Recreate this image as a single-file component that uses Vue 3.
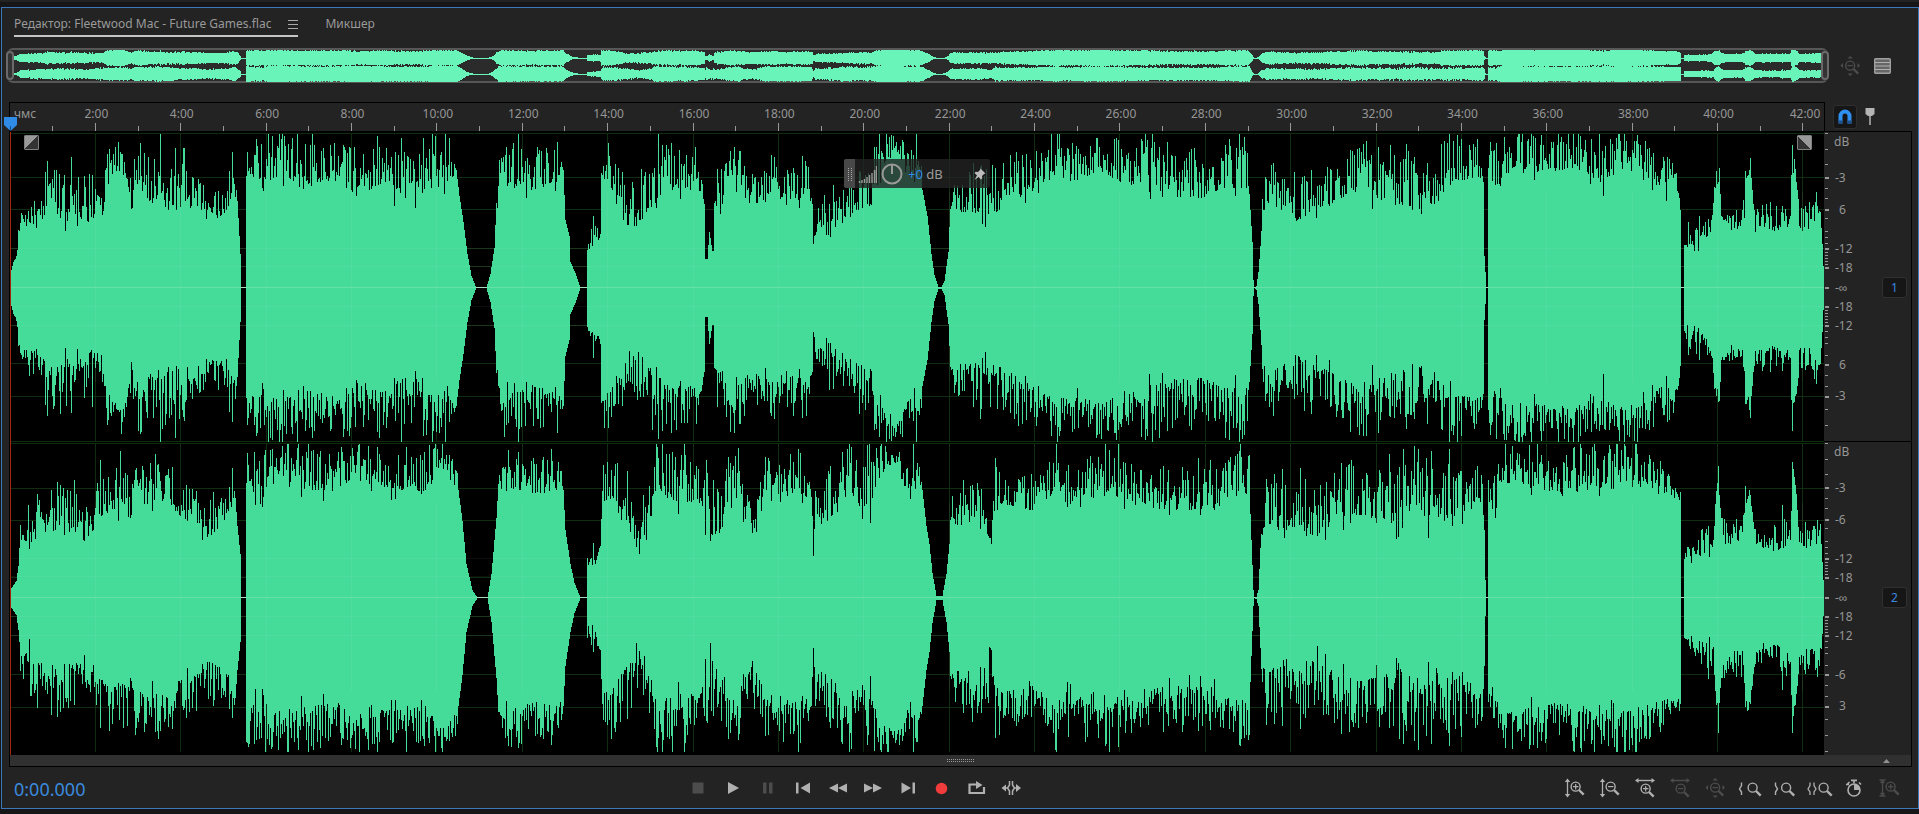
<script setup>
const PLOT_W = 1814
const CH_H = 310
const MID = 155

/* Envelope points: [x, peak, body]; body defaults to peak where the outline is smooth. */
const envelopes = [
  [
    [0, 14], [3, 26], [6, 36, 30], [9, 70, 55], [12, 84, 62], [20, 89, 62], [32, 88, 66], [36, 115, 80], [50, 126, 70],
    [65, 112, 74], [80, 114, 62], [90, 87, 60], [98, 137, 104], [108, 146, 118], [115, 150, 110], [119, 98, 74],
    [127, 146, 104], [140, 138, 86], [158, 140, 76], [170, 132, 78], [180, 116, 79], [195, 100, 77], [205, 92, 67],
    [215, 102, 76], [223, 127, 92], [226, 108, 90], [228, 70], [230, 34], [231, 0], [235, 0], [235.5, 128, 108],
    [255, 148, 106], [268, 154, 112], [290, 140, 96], [320, 146, 108], [350, 138, 92], [372, 142, 104], [394, 138, 88],
    [410, 142, 92], [422, 154, 112], [440, 154, 106], [446, 118], [449, 92], [453, 66], [457, 34], [461, 12], [466, 0],
    [476, 0], [480, 14], [484, 40], [486, 85], [487, 115, 88], [491, 154, 110], [500, 144, 104], [525, 140, 96],
    [550, 140, 108], [553, 118], [555, 68], [559, 52], [560, 26], [565, 15], [570, 0], [576, 0], [576.5, 37],
    [582, 66, 42], [590, 58, 50], [591, 140, 112], [607, 132, 92], [615, 92, 60], [627, 112, 62], [642, 142, 82],
    [656, 146, 96], [685, 140, 98], [691, 118, 92], [694, 84], [695, 29], [697, 29], [699, 56], [702, 37], [703, 37],
    [704, 118, 80], [725, 136, 98], [738, 110, 79], [766, 132, 96], [776, 112, 78], [797, 130, 96], [802, 84],
    [803, 44], [807, 84, 60], [819, 102, 58], [836, 92, 68], [852, 122, 78], [862, 118, 78], [866, 142, 98],
    [873, 154, 122], [886, 154, 142], [896, 142, 112], [909, 154, 110], [912, 98], [917, 72], [921, 34], [924, 13],
    [928, 1], [931, 1], [934, 7], [938, 36], [940, 86, 76], [948, 112, 76], [979, 122, 72], [999, 120, 82],
    [1023, 134, 98], [1046, 150, 112], [1060, 138, 106], [1093, 154, 116], [1113, 136, 102], [1134, 152, 102],
    [1158, 132, 90], [1190, 128, 90], [1222, 142, 100], [1236, 152, 98], [1239, 94], [1242, 46], [1243, 8], [1244, 0],
    [1246, 2], [1248, 16], [1250, 42], [1252, 94, 70], [1259, 122, 86], [1284, 108, 66], [1304, 116, 76],
    [1344, 138, 96], [1378, 128, 84], [1403, 138, 78], [1426, 112, 80], [1433, 146, 104], [1468, 148, 110],
    [1473, 106], [1474, 32], [1476, 0], [1477.5, 0], [1478, 142, 104], [1488, 142, 100], [1493, 152, 114],
    [1530, 152, 116], [1572, 154, 120], [1593, 140, 96], [1602, 154, 120], [1627, 146, 116], [1657, 124, 94],
    [1666, 126, 100], [1669, 90], [1670, 78], [1670.5, 0], [1673, 0], [1673.5, 42], [1676, 60, 42], [1686, 72, 40],
    [1701, 74, 54], [1704, 118, 100], [1707, 120, 100], [1709, 126, 108], [1711, 76, 70], [1715, 92, 66],
    [1717, 74, 62], [1731, 80, 58], [1734, 92, 66], [1735, 114, 104], [1738, 118, 108], [1740, 148, 122],
    [1742, 98], [1745, 70, 56], [1753, 90, 62], [1763, 76, 56], [1780, 80, 64], [1781, 148, 120], [1784, 132, 112],
    [1787, 98], [1789, 78, 54], [1806, 94, 64], [1810, 76], [1812, 44], [1814, 0],
  ],
  [
    [0, 8], [6, 17], [8, 32], [10, 70, 56], [19, 104, 54], [35, 102, 66], [50, 112, 68], [70, 102, 64], [77, 78, 50],
    [79, 92, 72], [88, 122, 80], [110, 146, 88], [119, 112, 78], [128, 134, 92], [157, 134, 98], [169, 116, 80],
    [186, 104, 76], [198, 102, 60], [218, 98, 76], [222, 146, 96], [225, 100], [227, 72], [230, 44], [231, 0],
    [235, 0], [235.5, 150, 112], [253, 140, 90], [258, 154, 114], [329, 144, 104], [343, 154, 122], [383, 146, 108],
    [419, 142, 106], [425, 154, 130], [445, 154, 122], [448, 108], [452, 77], [456, 34], [462, 8], [467, 0], [477, 0],
    [481, 24], [486, 80], [488, 114], [491, 154, 108], [497, 150, 110], [526, 138, 104], [550, 140, 104], [553, 108],
    [555, 68], [560, 34], [564, 15], [570, 0], [576, 0], [576.5, 38, 26], [582, 60, 34], [585, 34], [588, 56, 46],
    [590, 52], [593, 140, 96], [604, 140, 84], [626, 100, 56], [637, 90, 56], [644, 148, 100], [673, 142, 96],
    [691, 130, 94], [695, 120, 66], [707, 136, 60], [728, 148, 104], [733, 104, 76], [746, 112, 64], [752, 132, 100],
    [769, 142, 104], [787, 146, 104], [801, 116, 100], [803, 70, 40], [805, 112, 70], [822, 130, 80], [834, 150, 92],
    [860, 154, 92], [867, 154, 118], [883, 154, 134], [895, 142, 110], [907, 150, 108], [912, 108], [916, 72],
    [919, 54], [922, 25], [926, 2], [932, 2], [936, 24], [939, 54], [940, 78], [942, 104, 72], [965, 114, 72],
    [981, 112, 60], [985, 138, 94], [1022, 122, 88], [1038, 134, 98], [1046, 154, 112], [1052, 124, 90],
    [1079, 146, 106], [1099, 146, 106], [1124, 132, 92], [1152, 130, 88], [1201, 128, 88], [1234, 148, 102],
    [1239, 148, 106], [1241, 58], [1243, 8], [1244, 0], [1246, 1], [1248, 8], [1250, 50], [1251, 78, 58],
    [1254, 112, 64], [1280, 114, 72], [1304, 118, 62], [1317, 122, 70], [1344, 142, 84], [1364, 124, 78],
    [1393, 130, 70], [1402, 138, 82], [1426, 126, 68], [1442, 134, 84], [1453, 124, 72], [1472, 124, 98], [1474, 68],
    [1475, 18], [1476, 0], [1477.5, 0], [1478, 120, 98], [1485, 112, 78], [1490, 150, 116], [1553, 142, 102],
    [1589, 152, 110], [1607, 154, 114], [1633, 146, 108], [1656, 126, 100], [1669, 112, 98], [1670, 106], [1670.5, 0],
    [1673, 0], [1673.5, 38], [1676, 52, 40], [1687, 68, 40], [1703, 74, 46], [1705, 114, 98], [1708, 130, 108],
    [1711, 90, 80], [1714, 74, 54], [1732, 72, 50], [1735, 108, 94], [1740, 122, 100], [1743, 76], [1745, 70, 54],
    [1765, 72, 46], [1773, 84, 50], [1780, 66, 56], [1782, 132, 116], [1785, 128, 104], [1787, 88], [1789, 72, 52],
    [1810, 74, 50], [1812, 36], [1814, 0],
  ],
]

function noise(seed) {
  let s = seed
  return () => {
    s = (s + 0x6d2b79f5) | 0
    let t = Math.imul(s ^ (s >>> 15), 1 | s)
    t = (t + Math.imul(t ^ (t >>> 7), 61 | t)) ^ t
    return ((t ^ (t >>> 14)) >>> 0) / 4294967296
  }
}

function sample(points, rand) {
  const cols = []
  let k = 0
  for (let x = 0; x < PLOT_W; x++) {
    while (k < points.length - 2 && points[k + 1][0] <= x) k++
    const [x0, p0, b0 = p0] = points[k]
    const [x1, p1, b1 = p1] = points[k + 1]
    const f = (x - x0) / (x1 - x0)
    const peak = p0 + (p1 - p0) * f
    const body = b0 + (b1 - b0) * f
    const range = peak - body
    const shared = rand()
    const spike = rand() > 0.92
    const dip = rand() > 0.95
    const amp = () => {
      const r = rand() < 0.5 ? shared : rand()
      let a = body + range * Math.pow(r, 1.5) * 1.05
      if (spike) a = peak + range * 0.35 * rand()
      else if (dip) a = body - range * 0.3 * rand()
      return Math.max(0, Math.min(154, Math.round(a)))
    }
    cols.push([amp(), amp(), body, peak])
  }
  return cols
}

function outline(cols, mid, up, down) {
  let top = ''
  let bottom = ''
  cols.forEach((c, i) => {
    top += `V${mid - up(c)}h1`
    const j = cols.length - 1 - i
    bottom += `V${mid + down(cols[j])}h-1`
  })
  return `M0 ${mid}${top}${bottom}z`
}

const samples = envelopes.map((points, i) => sample(points, noise(77 + i * 31)))
const waves = samples.map((cols) => outline(cols, MID + 0.5, (c) => c[0], (c) => c[1]))

const shrink = (a, c) => Math.min(8, Math.max(0.5, Math.round((c[2] * 0.55 + a * 0.45) / 15)))
const overviews = samples.map((cols) => outline(cols, 8, (c) => shrink(c[0], c), (c) => shrink(c[1], c)))

const marks = Array.from({ length: 21 }, (_, i) => ({
  x: ((i + 1) * 85.38 * 100) / PLOT_W + '%',
  mid: ((i + 0.5) * 85.38 * 100) / PLOT_W + '%',
  labelX: ((i === 20 ? 1795 : (i + 1) * 85.38 + 1) * 100) / PLOT_W + '%',
  text: (i + 1) * 2 + ':00',
}))

const pct = (offset) => ((MID + 0.5 + offset) * 100) / CH_H + '%'
const majors = [-110, -78, -39, -20, 0, 19, 38, 77, 109]
const minors = [-154, -138, -123, -99, -89, -69, -56, -50, -44, -35, -32, -29, -26, -23, 23, 26, 29, 32, 35, 44, 50, 56, 68, 88, 99, 122, 138, 154]
const channels = [
  { id: 1, labels: ['-3', '6', '-12', '-18', '-∞', '-18', '-12', '6', '-3'], grid: [-154, -110, -78, -39, -21, 38, 76, 109, 154] },
  { id: 2, labels: ['-3', '-6', '-12', '-18', '-∞', '-18', '-12', '-6', '3'], grid: [-154, -109, -77, -20, 19, 38, 77, 110] },
]

const transport = [
  { name: 'Стоп', icon: 'stop', off: true },
  { name: 'Воспроизвести', icon: 'play' },
  { name: 'Пауза', icon: 'pause', off: true },
  { name: 'В начало', icon: 'first' },
  { name: 'Назад', icon: 'rewind' },
  { name: 'Вперёд', icon: 'forward' },
  { name: 'В конец', icon: 'last' },
  { name: 'Запись', icon: 'record' },
  { name: 'Цикл', icon: 'loop' },
  { name: 'Пропустить выделение', icon: 'skip' },
]
const zooms = [
  { name: 'Увеличить амплитуду', icon: 'amp-in' },
  { name: 'Уменьшить амплитуду', icon: 'amp-out' },
  { name: 'Увеличить время', icon: 'time-in' },
  { name: 'Уменьшить время', icon: 'time-out', off: true },
  { name: 'Показать всё', icon: 'full', off: true },
  { name: 'К точке входа', icon: 'in-point' },
  { name: 'К точке выхода', icon: 'out-point' },
  { name: 'К выделению', icon: 'selection' },
  { name: 'По времени', icon: 'timer' },
  { name: 'Сбросить амплитуду', icon: 'amp-reset', off: true },
]
</script>

<template>
  <div class="app">
    <svg class="defs" aria-hidden="true">
      <symbol id="lens" viewBox="0 0 16 16">
        <circle cx="6" cy="6" r="4.8" fill="none" stroke="currentColor" stroke-width="1.5" />
        <path d="M9.6 9.6l5 5" stroke="currentColor" stroke-width="2.6" />
      </symbol>
      <symbol id="stop" viewBox="0 0 26 20"><path d="M7.5 4.5h11v11h-11z" fill="currentColor" /></symbol>
      <symbol id="play" viewBox="0 0 26 20"><path d="M8 4l11 6-11 6z" fill="currentColor" /></symbol>
      <symbol id="pause" viewBox="0 0 26 20"><path d="M8 4.500h3.5v11H8zM14 4.500h3.5v11H14z" fill="currentColor" /></symbol>
      <symbol id="first" viewBox="0 0 26 20"><path d="M6 4.5h2.5v11H6zM20 4.5v11L10.5 10z" fill="currentColor" /></symbol>
      <symbol id="rewind" viewBox="0 0 26 20"><path d="M13 5.5v9L4 10zM22 5.5v9L13 10z" fill="currentColor" /></symbol>
      <symbol id="forward" viewBox="0 0 26 20"><path d="M4 5.5v9l9-4.5zM13 5.5v9l9-4.5z" fill="currentColor" /></symbol>
      <symbol id="last" viewBox="0 0 26 20"><path d="M17.5 4.5H20v11h-2.5zM6.5 4.5v11L16 10z" fill="currentColor" /></symbol>
      <symbol id="record" viewBox="0 0 26 20"><circle cx="11.5" cy="10.500" r="5.8" fill="#f23c3c" /></symbol>
      <symbol id="loop" viewBox="0 0 26 20">
        <path d="M8.5 6.5H4.500v8.500h14.500V9" fill="none" stroke="currentColor" stroke-width="2.2" />
        <path d="M8 5.5h3V3l6.500 4-6.500 4V7.600h-3z" fill="currentColor" />
      </symbol>
      <symbol id="skip" viewBox="0 0 26 20">
        <path d="M6 6.5v7L1.5 10zM16 6v8l5-4z" fill="currentColor" />
        <path d="M5 10h3M14.500 10h3M9.500 3v4l-2 3 2 3v4M12.500 3v4l2 3-2 3v4" fill="none" stroke="currentColor" stroke-width="1.5" />
      </symbol>
      <symbol id="amp-in" viewBox="0 0 26 20">
        <path d="M5.5 2v16" stroke="currentColor" stroke-width="1.3" />
        <path d="M2.8 4L5.5.5 8.200 4zM2.8 16l2.7 3.500L8.200 16z" fill="currentColor" />
        <use href="#lens" x="8" y="3" width="15" height="15" />
        <path d="M11 8.6h5.4M13.7 6v5.4" stroke="currentColor" stroke-width="1.2" />
      </symbol>
      <symbol id="amp-out" viewBox="0 0 26 20">
        <path d="M5.5 2v16" stroke="currentColor" stroke-width="1.3" />
        <path d="M2.8 4L5.5.5 8.200 4zM2.8 16l2.7 3.500L8.200 16z" fill="currentColor" />
        <use href="#lens" x="8" y="3" width="15" height="15" />
        <path d="M11 8.6h5.4" stroke="currentColor" stroke-width="1.2" />
      </symbol>
      <symbol id="time-in" viewBox="0 0 26 20">
        <path d="M5 2.500h16" stroke="currentColor" stroke-width="1.4" />
        <path d="M6.5 0L3 2.500l3.500 2.500zM19.5 0L23 2.500l-3.500 2.500z" fill="currentColor" />
        <use href="#lens" x="8" y="5" width="15" height="15" />
        <path d="M11 10.6h5.4M13.7 8v5.4" stroke="currentColor" stroke-width="1.2" />
      </symbol>
      <symbol id="time-out" viewBox="0 0 26 20">
        <path d="M5 2.500h16" stroke="currentColor" stroke-width="1.4" />
        <path d="M6.5 0L3 2.500l3.500 2.500zM19.5 0L23 2.500l-3.500 2.500z" fill="currentColor" />
        <use href="#lens" x="8" y="5" width="15" height="15" />
        <path d="M11 10.6h5.4" stroke="currentColor" stroke-width="1.2" />
      </symbol>
      <symbol id="full" viewBox="0 0 26 20">
        <use href="#lens" x="7.5" y="4" width="15" height="15" />
        <path d="M10.5 9.6h5.4" stroke="currentColor" stroke-width="1.2" />
        <path d="M10.500 2.5L13.2 0l2.7 2.5zM10.5 17.5l2.7 2.5 2.7-2.5zM6 7L3.5 9.6 6 12.2zM20.5 7L23 9.6l-2.5 2.6z" fill="currentColor" />
      </symbol>
      <symbol id="in-point" viewBox="0 0 26 20">
        <path d="M4.5 4.5v3L2.500 11l2 3v3" fill="none" stroke="currentColor" stroke-width="1.4" />
        <use href="#lens" x="10" y="4" width="15" height="15" />
      </symbol>
      <symbol id="out-point" viewBox="0 0 26 20">
        <path d="M3.5 4.5v3l2 3.500-2 3v3" fill="none" stroke="currentColor" stroke-width="1.4" />
        <use href="#lens" x="8.5" y="4" width="15" height="15" />
      </symbol>
      <symbol id="selection" viewBox="0 0 26 20">
        <path d="M3 4.5v3L1 11l2 3v3M7 4.5v3l2 3.500-2 3v3" fill="none" stroke="currentColor" stroke-width="1.3" />
        <use href="#lens" x="11" y="4" width="15" height="15" />
      </symbol>
      <symbol id="timer" viewBox="0 0 26 20">
        <circle cx="12" cy="12" r="6" fill="none" stroke="currentColor" stroke-width="1.6" />
        <path d="M12 12V6A6 6 0 0 1 18 12zM9 1.500h6v1.800h-2.200v2h-1.600v-2H9z" fill="currentColor" />
        <path d="M5.500 6l2-2M17 4.500l2 2M4 6.500h3" stroke="currentColor" stroke-width="1.6" />
      </symbol>
      <symbol id="amp-reset" viewBox="0 0 26 20">
        <path d="M2.5 2h6M2.5 18h6M5.5 2v16M3.5 5l2-2 2 2M3.500 15l2 2 2-2" fill="none" stroke="currentColor" stroke-width="1.3" />
        <use href="#lens" x="8" y="3" width="15" height="15" />
        <path d="M11 8.6h5.4M13.7 6v5.4" stroke="currentColor" stroke-width="1.2" />
      </symbol>
    </svg>

    <main class="panel">
      <nav class="tabs">
        <div class="tab active">
          <button class="plain">Редактор: Fleetwood Mac - Future Games.flac</button>
          <button class="plain menu" aria-label="Меню панели"><i></i><i></i><i></i></button>
        </div>
        <button class="plain tab">Микшер</button>
      </nav>

      <section class="overview-row">
        <div class="overview">
          <div class="minis">
            <svg v-for="(d, i) in overviews" :key="i" viewBox="0 0 1814 16" preserveAspectRatio="none" shape-rendering="crispEdges">
              <path :d="d" fill="#69f5b9" />
            </svg>
          </div>
          <span class="handle start"></span>
          <span class="handle end"></span>
        </div>
        <div class="overview-tools">
          <button class="plain off" aria-label="Показать всё"><svg width="26" height="20"><use href="#full" /></svg></button>
          <button class="plain" aria-label="Список">
            <svg width="18" height="18" viewBox="0 0 18 18">
              <rect x=".7" y="1.7" width="15.6" height="14.6" rx="1" fill="#666" stroke="#a0a0a0" stroke-width="1.4" />
              <path d="M1 5.500h15M1 9h15M1 12.500h15" stroke="#b0b0b0" />
            </svg>
          </button>
        </div>
      </section>

      <section class="ruler-row">
        <div class="ruler">
          <svg width="100%" height="28">
            <text class="unit" x="4" y="15">чмс</text>
            <g v-for="m in marks" :key="m.text">
              <text class="time" :x="m.labelX" y="15">{{ m.text }}</text>
              <line :x1="m.x" :x2="m.x" y1="20" y2="28" />
              <line :x1="m.mid" :x2="m.mid" y1="23" y2="28" />
            </g>
          </svg>
          <svg class="playhead" width="13" height="14" viewBox="0 0 13 14"><path d="M0 0h13v8l-6.500 6L0 8z" fill="#2f8be6" /><path d="M6.500 9v5" stroke="#1a4f85" /></svg>
        </div>
        <div class="ruler-tools">
          <button class="snap" aria-label="Привязка" aria-pressed="true">
            <svg width="16" height="18" viewBox="0 0 16 18">
              <path d="M3.500 15.500V8a4.500 4.500 0 0 1 9 0V15.500" fill="none" stroke="#3090f0" stroke-width="4" />
              <path d="M1.500 12.500h4v3h-4zM10.500 12.500h4v3h-4z" fill="#1d4f86" />
            </svg>
          </button>
          <button class="plain" aria-label="Маркер">
            <svg width="10" height="18" viewBox="0 0 10 18"><path d="M.5 0h9v6L7 8H3L.5 6z" fill="#b4b4b4" /><path d="M5 7v10" stroke="#b4b4b4" stroke-width="1.5" /></svg>
          </button>
        </div>
      </section>

      <section class="editor">
        <div class="plot">
          <svg v-for="(c, i) in channels" :key="c.id" class="channel" viewBox="0 0 1814 310" preserveAspectRatio="none" shape-rendering="crispEdges">
            <g class="grid">
              <line v-for="g in c.grid" :key="g" x1="0" x2="1814" :y1="155.5 + g" :y2="155.5 + g" />
              <line v-for="n in 21" :key="n" :x1="n * 85.38" :x2="n * 85.38" y1="1" y2="310" />
            </g>
            <line x1="0" x2="1814" y1="155.5" y2="155.5" stroke="#a8d8b8" />
            <path :d="waves[i]" fill="#45dc99" />
            <g class="sheen">
              <line v-for="g in [-39, -21, 19, 38]" :key="g" x1="0" x2="1814" :y1="155.5 + g" :y2="155.5 + g" />
              <line v-for="n in 21" :key="n" :x1="n * 85.38" :x2="n * 85.38" y1="60" y2="250" />
            </g>
            <line x1="0" x2="1814" y1="155.5" y2="155.5" stroke="#a6e6bf" stroke-opacity=".35" />
          </svg>
          <button class="fade fade-in" aria-label="Нарастание"></button>
          <button class="fade fade-out" aria-label="Затухание"></button>
          <span class="cursor"></span>
          <div class="hud">
            <span class="grip"><svg width="5" height="14"><path d="M1.500 1v13M4.500 1v13" stroke="#aaa" stroke-dasharray="1 1" /></svg></span>
            <svg class="level" width="19" height="18"><path d="M1.500 16v2M4 15v3M6.500 14v4M9 12v6M11.500 10v8M14 8v10M16.500 5v13M18.500 1v17" stroke="#999" stroke-width="1.4" /></svg>
            <svg class="knob" width="22" height="22" viewBox="0 0 22 22"><circle cx="11" cy="11" r="9.500" fill="none" stroke="#999" stroke-width="2" /><path d="M11 1.500V11" stroke="#999" stroke-width="2" /></svg>
            <span class="gain"><b>+0</b> dB</span>
            <button class="plain pin" aria-label="Закрепить">
              <svg width="12" height="12" viewBox="0 0 12 12"><path d="M6.500.5l5 5-1.500.5-2 2 .3 2.300-1.300 1.200-2.500-2.500L.5 12 3 7.500.5 5l1.200-1.300L4 4l2-2z" fill="#bbb" /></svg>
            </button>
          </div>
        </div>
        <div class="axes">
          <div v-for="c in channels" :key="c.id" class="axis">
            <svg width="80" height="100%">
              <line v-for="m in minors" :key="m" x1="1" x2="4" :y1="pct(m)" :y2="pct(m)" />
              <line v-for="m in majors" :key="'M' + m" x1="1" x2="5" :y1="pct(m)" :y2="pct(m)" stroke-width="2" />
              <text x="10" :y="pct(-142)">dB</text>
              <text v-for="(m, i) in majors" :key="'t' + m" :x="c.labels[i].startsWith('-') ? 11 : 15" :y="pct(m + 4)">{{ c.labels[i] }}</text>
            </svg>
            <button class="number">{{ c.id }}</button>
          </div>
        </div>
      </section>

      <div class="splitter">
        <svg class="dots" width="28" height="5"><path d="M0 1.500h28M0 3.500h28" stroke="#999" stroke-dasharray="1 1" /></svg>
        <svg class="arrow" width="7" height="4"><path d="M0 4l3.500-4L7 4z" fill="#909090" /></svg>
      </div>

      <footer class="bar">
        <output class="clock">0:00.000</output>
        <div class="group">
          <button v-for="b in transport" :key="b.icon" class="plain tool" :class="{ off: b.off }" :aria-label="b.name">
            <svg width="26" height="20"><use :href="'#' + b.icon" /></svg>
          </button>
        </div>
        <div class="group right">
          <button v-for="b in zooms" :key="b.icon" class="plain tool" :class="{ off: b.off }" :aria-label="b.name">
            <svg width="26" height="20"><use :href="'#' + b.icon" /></svg>
          </button>
        </div>
      </footer>
    </main>
  </div>
</template>

<style>
body {
  background: #161616;
}
</style>

<style scoped>
.app {
  box-sizing: border-box;
  min-height: 100vh;
  display: flex;
  flex-direction: column;
  padding: 5px 0 5px 1px;
  border-top: 2px solid #232323;
  background: #161616;
  color: #9a9a9a;
  font: 12px/16px "Noto Sans", sans-serif;
}
.defs {
  position: absolute;
  width: 0;
  height: 0;
}
.panel {
  flex: 1;
  display: flex;
  flex-direction: column;
  border: 1px solid #3a78ba;
  background: #232323;
}
button {
  font: inherit;
  color: inherit;
  margin: 0;
  padding: 0;
}
.plain {
  border: 0;
  background: none;
}
svg {
  display: block;
}
.tabs {
  display: flex;
  align-items: flex-start;
  gap: 27px;
  height: 40px;
  padding: 8px 12px 0;
  box-sizing: border-box;
}
.tab {
  display: flex;
  align-items: center;
  height: 16px;
}
.active {
  gap: 17px;
  padding-bottom: 3px;
  border-bottom: 2px solid #c4c4c4;
}
.menu {
  display: flex;
  flex-direction: column;
  gap: 3px;
}
.menu i {
  width: 10px;
  height: 1px;
  background: #aaa;
}
.overview-row {
  display: flex;
  height: 35px;
  padding-left: 5px;
}
.overview {
  position: relative;
  flex: 1;
  box-sizing: border-box;
  display: flex;
  align-items: center;
  border: 2px solid #575757;
  border-left-color: #444;
  border-right-color: #444;
  border-radius: 6px;
  background: #2b2b2b;
}
.handle {
  position: absolute;
  top: 1px;
  box-sizing: border-box;
  width: 8px;
  height: 29px;
  border: 2px solid #6a6a6a;
  border-radius: 4px;
  background: #333;
}
.start {
  left: -3px;
}
.end {
  right: -3px;
}
.minis {
  flex: 1;
  min-width: 0;
  margin: 0 2px 0 1px;
}
.minis svg {
  width: 100%;
  height: 16px;
}
.overview-tools {
  width: 90px;
  display: flex;
  align-items: center;
  gap: 11px;
  padding-left: 9px;
  box-sizing: border-box;
}
.off {
  color: #4c4c4c;
}
.ruler-row {
  display: flex;
  margin: 19px 6px 0 7px;
}
.ruler {
  flex: 1;
  position: relative;
  height: 28px;
  border: 1px solid #000;
  border-bottom: 0;
}
.ruler text,
.axis text {
  fill: #969696;
}
.ruler .time {
  text-anchor: middle;
}
.ruler line,
.axis line {
  stroke: #999;
  shape-rendering: crispEdges;
}
.playhead {
  position: absolute;
  left: -6px;
  bottom: 0;
}
.ruler-tools {
  width: 87px;
  display: flex;
  align-items: center;
  gap: 8px;
  padding-left: 8px;
  box-sizing: border-box;
}
.snap {
  display: grid;
  place-items: center;
  width: 24px;
  height: 24px;
  border: 1px solid #2e2e2e;
  border-radius: 3px;
  background: #161616;
}
.editor {
  flex: 1;
  display: flex;
  margin: 0 6px 0 7px;
  border: 1px solid #000;
}
.plot {
  flex: 1;
  min-width: 0;
  position: relative;
  display: flex;
  flex-direction: column;
  padding-bottom: 3px;
  background: #000;
}
.channel {
  flex: 1 1 0;
  min-height: 0;
  width: 100%;
}
.grid line {
  stroke: #0f2e10;
}
.sheen line {
  stroke: #fff;
  stroke-opacity: 0.05;
}
.cursor {
  position: absolute;
  left: 0;
  top: 0;
  bottom: 0;
  width: 1px;
  background: #a3260c;
}
.fade {
  position: absolute;
  top: 3px;
  width: 15px;
  height: 15px;
  border: 1px solid #808080;
  border-radius: 1px;
}
.fade-in {
  left: 14px;
  background: linear-gradient(135deg, #999 50%, #333 50%);
}
.fade-out {
  right: 12px;
  background: linear-gradient(225deg, #999 50%, #333 50%);
}
.hud {
  position: absolute;
  left: calc(50% - 73px);
  top: 27px;
  width: 146px;
  height: 29px;
  display: flex;
  align-items: center;
  border-radius: 2px;
  background: rgba(35, 35, 35, 0.8);
  overflow: hidden;
}
.grip {
  width: 11px;
  height: 100%;
  display: grid;
  place-items: center;
  background: #484848;
}
.level {
  margin-left: 3px;
}
.knob {
  margin: 0 5px 0 4px;
}
.gain {
  flex: 1;
  font-size: 13px;
}
.gain b {
  font-weight: 400;
  color: #2f8be6;
}
.pin {
  padding: 6px 4px 5px 9px;
}
.axes {
  width: 87px;
  display: flex;
  flex-direction: column;
  padding-bottom: 3px;
}
.axis {
  flex: 1 1 0;
  min-height: 0;
  position: relative;
}
.axis + .axis {
  box-shadow: 0 -1px #000;
}
.axis svg {
  position: absolute;
  height: 100%;
}
.number {
  position: absolute;
  right: 4px;
  top: calc(50% - 10px);
  width: 25px;
  height: 21px;
  border: 1px solid #303030;
  border-radius: 3px;
  background: #161616;
  color: #3b86e0;
}
.splitter {
  position: relative;
  display: flex;
  align-items: center;
  justify-content: center;
  height: 11px;
  margin: -1px 6px 0 7px;
  border: 1px solid #000;
  border-top: 0;
  background: #303030;
}
.arrow {
  position: absolute;
  right: 21px;
}
.bar {
  display: flex;
  align-items: center;
  height: 41px;
  padding: 0 11px 0 12px;
}
.clock {
  flex: 0 0 35%;
  margin-right: 4px;
  padding-top: 2px;
  font-size: 18px;
  color: #3b8ade;
}
.group {
  display: flex;
  color: #b0b0b0;
}
.right {
  margin-left: auto;
}
.tool {
  display: grid;
  place-items: center;
  width: 35px;
  height: 28px;
}
.tool.off {
  color: #4c4c4c;
}
</style>
